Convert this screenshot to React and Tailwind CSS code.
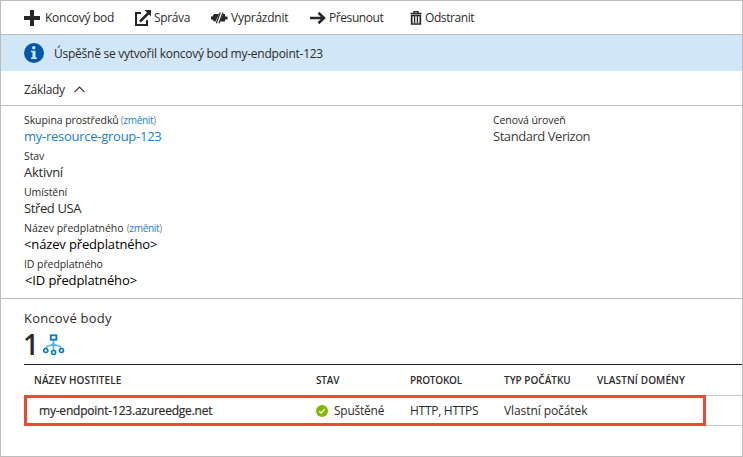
import React from "react";

function PlusIcon() {
  return (
    <svg width="16" height="16" viewBox="0 0 16 16" className="block shrink-0" fill="#262626">
      <path d="M6 0h4v6h6v4h-6v6H6v-6H0V6h6z" />
    </svg>
  );
}

function ExternalIcon() {
  return (
    <svg width="17" height="16" viewBox="0 0 17 16" className="block shrink-0" fill="none" stroke="#262626">
      <path d="M6 3H1v12h11v-5" strokeWidth="2" />
      <path d="M5 11.5L13.5 3" strokeWidth="2.6" />
      <path d="M9.500 0H16v6.500z" fill="#262626" stroke="none" />
    </svg>
  );
}

function PurgeIcon() {
  return (
    <svg width="17" height="12" viewBox="0 0 17 12" className="block shrink-0" fill="#262626">
      <path d="M0 4.500h1.500L3 2h5L4.500 9.500H3L1.500 7.500H0z" />
      <path d="M12 2h2v2.500h2.500v3H14v2H9z" />
      <path d="M9.300 0.500L5.300 11.300M12 0.500L8 11.300" stroke="#262626" strokeWidth="1.200" />
    </svg>
  );
}

function ArrowIcon() {
  return (
    <svg width="16" height="12" viewBox="0 0 16 12" className="block shrink-0" fill="none" stroke="#262626" strokeWidth="2.600">
      <path d="M0 6h14M8.500 0.800L14 6l-5.500 5.200" />
    </svg>
  );
}

function TrashIcon() {
  return (
    <svg width="12" height="14" viewBox="0 0 12 14" className="block shrink-0" fill="none" stroke="#262626">
      <path d="M0.500 2.500h11M4 2V0.700h4V2" strokeWidth="1.300" />
      <path d="M1.700 4.500v8.500h8.600V4.500z" strokeWidth="1.700" />
      <path d="M4.600 5v7M7.400 5v7" strokeWidth="1.300" />
    </svg>
  );
}

function InfoIcon() {
  return (
    <svg width="20" height="20" viewBox="0 0 20 20" className="block shrink-0">
      <circle cx="10" cy="10" r="10" fill="#0058ad" />
      <circle cx="9.800" cy="4.800" r="1.700" fill="#d3e7f7" />
      <path d="M7 7.700h4.500v6.800H13V16H7v-1.500h1.500V9.200H7z" fill="#d3e7f7" />
    </svg>
  );
}

function EndpointsIcon() {
  return (
    <svg width="22" height="22" viewBox="0 0 22 22" className="mt-px block shrink-0" fill="none">
      <path d="M10.500 6v11M3 15c0-2.500 1.500-3.300 4-3.500 2-.2 3.500-1 3.500-2.800 0 1.800 1.500 2.600 3.500 2.800 2.500.2 4 1 4 3.500" stroke="#59b4d9" strokeWidth="1.700" />
      <rect x="7.800" y="1.300" width="5.600" height="4.400" fill="#fff" stroke="#0078cc" strokeWidth="1.800" />
      <circle cx="2.800" cy="16.500" r="2" fill="#fff" stroke="#0078cc" strokeWidth="1.600" />
      <circle cx="10.600" cy="18.500" r="2" fill="#fff" stroke="#0078cc" strokeWidth="1.600" />
      <circle cx="18.500" cy="16.500" r="2" fill="#fff" stroke="#0078cc" strokeWidth="1.600" />
    </svg>
  );
}

function CheckIcon() {
  return (
    <svg width="12" height="12" viewBox="0 0 12 12" className="block shrink-0">
      <circle cx="6" cy="6" r="6" fill="#7fba00" />
      <path d="M3.200 6.200l2 1.900 3.600-4" fill="none" stroke="#fff" strokeWidth="1.400" />
    </svg>
  );
}

function Field({ label, change, children }) {
  return (
    <div className="h-9">
      <div className="flex h-4 items-center pt-px text-[10.500px] tracking-[-0.080px]">
        <span>{label}</span>
        {change && (
          <span className="ml-[2px] pb-[2px] text-[10px] leading-[14px] tracking-[-0.300px] text-[#888]">
            (<a className="text-[#1580d8]">změnit</a>)
          </span>
        )}
      </div>
      <div className="flex h-[17px] items-center text-[13px] tracking-[-0.260px]">{children}</div>
    </div>
  );
}

export default function App() {
  return (
    <div className="h-[457px] w-[743px] overflow-hidden border border-[#bcbcbc] bg-white font-['Open_Sans','Noto_Sans',sans-serif] whitespace-nowrap text-[#2b2b2b]">
      <header className="flex h-[34px] items-center border-b border-[#bcbcbc] pl-[23px] text-[12px] tracking-[-0.350px]">
        <div className="flex w-[111px] items-center gap-[5px]"><PlusIcon /><span className="tracking-[-0.250px]">Koncový bod</span></div>
        <div className="flex w-[76px] items-center gap-[2px]"><ExternalIcon /><span>Správa</span></div>
        <div className="flex w-[99px] items-center gap-[3px]"><PurgeIcon /><span className="tracking-[-0.250px]">Vyprázdnit</span></div>
        <div className="flex w-[100px] items-center gap-[3px]"><ArrowIcon /><span className="tracking-[-0.420px]">Přesunout</span></div>
        <div className="flex items-center gap-[3px]"><TrashIcon /><span className="tracking-[-0.420px]">Odstranit</span></div>
      </header>
      <div className="flex h-9 items-center gap-[10px] bg-[#d1e6f7] pl-[23px] text-[12px] tracking-[-0.250px]">
        <InfoIcon /><span className="pt-[2px]">Úspěšně se vytvořil koncový bod my-endpoint-123</span>
      </div>
      <div className="flex h-[35px] items-center gap-[9px] border-b border-[#bcbcbc] pt-[3px] pl-[23px] text-[12px]">
        <span className="tracking-[-0.300px]">Základy</span>
        <svg width="11" height="7" viewBox="0 0 11 7" fill="none" stroke="#333" strokeWidth="1.200"><path d="M0.500 6.200l5-5 5 5" /></svg>
      </div>
      <section className="flex h-[193px] border-b border-[#bcbcbc] pt-[6px] pl-[23px]">
        <div className="w-[469px]">
          <Field label="Skupina prostředků" change><a className="text-[#1580d8]">my-resource-group-123</a></Field>
          <Field label="Stav"><span>Aktivní</span></Field>
          <Field label="Umístění"><span className="tracking-[-0.380px]">Střed USA</span></Field>
          <Field label={<span className="mr-px tracking-[0.020px]">Název předplatného</span>} change><span className="tracking-[-0.140px] text-black">&lt;název předplatného&gt;</span></Field>
          <Field label="ID předplatného"><span className="pl-px tracking-[-0.120px] text-black">&lt;ID předplatného&gt;</span></Field>
        </div>
        <Field label="Cenová úroveň"><span className="tracking-[-0.450px] text-[#3c3c3c]">Standard Verizon</span></Field>
      </section>
      <section className="relative pl-[23px]">
        <h2 className="h-[34px] pt-[9px] text-[13px] leading-5 tracking-[0.200px]">Koncové body</h2>
        <div className="flex h-[31px] items-start gap-[5px]">
          <span className="-ml-px w-[15px] text-[28px] leading-[23px] font-semibold">1</span>
          <EndpointsIcon />
        </div>
        <div className="grid h-[31px] grid-cols-[282px_94px_94px_93px_1fr] items-center border-t border-[#222] pt-px pl-[10px] text-[10px] font-semibold">
          <span className="tracking-[0.060px]">NÁZEV HOSTITELE</span><span className="tracking-[-0.200px]">STAV</span><span className="tracking-[-0.200px]">PROTOKOL</span><span>TYP POČÁTKU</span><span className="tracking-[0.100px]">VLASTNÍ DOMÉNY</span>
        </div>
        <div className="grid h-[31px] grid-cols-[282px_94px_94px_93px_1fr] items-center border-y border-[#c8c8c8] pl-[10px] text-[12px]">
          <span className="pl-[5px] tracking-[-0.210px] [-webkit-text-stroke:0.2px_#2b2b2b]">my-endpoint-123.azureedge.net</span>
          <span className="flex items-center gap-[6px]"><CheckIcon /><span className="tracking-[-0.250px]">Spuštěné</span></span>
          <span className="tracking-[-0.280px]">HTTP, HTTPS</span>
          <span className="tracking-[-0.080px]">Vlastní počátek</span>
        </div>
        <div className="absolute bottom-0 left-[23px] h-[31px] w-[682px] border-3 border-[#ef4836]" />
      </section>
    </div>
  );
}
